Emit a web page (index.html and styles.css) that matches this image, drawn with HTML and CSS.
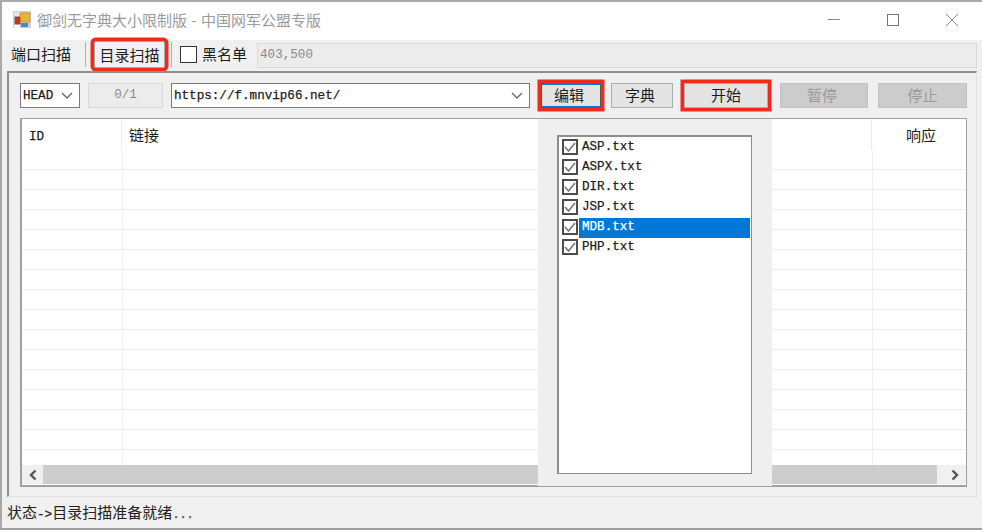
FILE: index.html
```html
<!DOCTYPE html>
<html lang="zh-CN">
<head>
<meta charset="utf-8">
<title>御剑无字典大小限制版</title>
<link rel="stylesheet" href="styles.css">
</head>
<body>
<div class="window">
  <header class="titlebar">
    <svg class="logo" viewBox="0 0 18 18" width="18" height="18"><rect x="0" y="0" width="18" height="17" fill="#cfcfcf"/><rect x="1" y="1" width="6" height="4" fill="#e6e6e6"/><rect x="1" y="14" width="6" height="3" fill="#f6f6f6"/><rect x="7" y="2" width="10" height="9" fill="#e8b52e" stroke="#b08a2a" stroke-width=".6"/><rect x="2" y="6" width="5" height="7" fill="#c8342a" stroke="#8a3a30" stroke-width=".6"/><rect x="8" y="12" width="7" height="4" fill="#3f86dc"/></svg>
    <span class="title">御剑无字典大小限制版 - 中国网军公盟专版</span>
    <div class="controls">
      <svg width="14" height="14" viewBox="0 0 14 14"><path d="M1 6.5H13" stroke="#8a8a8a" fill="none"/></svg>
      <svg width="14" height="14" viewBox="0 0 14 14"><rect x="1.5" y="1.5" width="11" height="11" stroke="#777" fill="none"/></svg>
      <svg width="14" height="14" viewBox="0 0 14 14"><path d="M1 1L13 13M13 1L1 13" stroke="#888" fill="none"/></svg>
    </div>
  </header>
  <nav class="toolbar">
    <span class="tab first-tab">端口扫描</span>
    <span class="sep"></span>
    <span class="tab tab-active ring">目录扫描</span>
    <span class="sep sep2"></span>
    <span class="check big"></span>
    <span class="tab black">黑名单</span>
    <span class="codes">403,500</span>
  </nav>
  <main class="panel">
    <div class="row">
      <div class="combo method"><span class="mono">HEAD</span><svg class="chev" width="12" height="7" viewBox="0 0 12 7"><path d="M1 1L6 6L11 1" stroke="#666" stroke-width="1.3" fill="none"/></svg></div>
      <div class="counter">0/1</div>
      <div class="combo url"><span class="mono">https://f.mnvip66.net/</span><svg class="chev" width="12" height="7" viewBox="0 0 12 7"><path d="M1 1L6 6L11 1" stroke="#666" stroke-width="1.3" fill="none"/></svg></div>
      <button class="btn edit ring">编辑</button>
      <button class="btn dict">字典</button>
      <button class="btn start ring">开始</button>
      <button class="btn off pause">暂停</button>
      <button class="btn off stop">停止</button>
    </div>
    <div class="grid">
      <div class="ghead"><span class="c1">ID</span><span class="c2">链接</span><span class="c3">响应</span></div>
      <div class="gbody">
        <div class="grow"><i></i><i></i><i></i></div>
        <div class="grow"><i></i><i></i><i></i></div>
        <div class="grow"><i></i><i></i><i></i></div>
        <div class="grow"><i></i><i></i><i></i></div>
        <div class="grow"><i></i><i></i><i></i></div>
        <div class="grow"><i></i><i></i><i></i></div>
        <div class="grow"><i></i><i></i><i></i></div>
        <div class="grow"><i></i><i></i><i></i></div>
        <div class="grow"><i></i><i></i><i></i></div>
        <div class="grow"><i></i><i></i><i></i></div>
        <div class="grow"><i></i><i></i><i></i></div>
        <div class="grow"><i></i><i></i><i></i></div>
        <div class="grow"><i></i><i></i><i></i></div>
        <div class="grow"><i></i><i></i><i></i></div>
        <div class="grow"><i></i><i></i><i></i></div>
        <div class="grow"><i></i><i></i><i></i></div>
      </div>
      <div class="hbar">
        <span class="arrow"><svg width="10" height="12" viewBox="0 0 10 12"><path d="M7.5 1.5L3 6L7.5 10.5" stroke="#555" stroke-width="2.4" fill="none"/></svg></span>
        <span class="thumb"></span>
        <span class="arrow arrow-r"><svg width="10" height="12" viewBox="0 0 10 12"><path d="M2.5 1.5L7 6L2.5 10.5" stroke="#555" stroke-width="2.4" fill="none"/></svg></span>
      </div>
    </div>
    <aside class="popup">
      <ul class="list">
        <li><span class="check"><svg width="12" height="12" viewBox="0 0 12 12"><path d="M1 6L4.5 10L11 2" stroke="#777" stroke-width="1.6" fill="none"/></svg></span><span class="item mono">ASP.txt</span></li>
        <li><span class="check"><svg width="12" height="12" viewBox="0 0 12 12"><path d="M1 6L4.5 10L11 2" stroke="#777" stroke-width="1.6" fill="none"/></svg></span><span class="item mono">ASPX.txt</span></li>
        <li><span class="check"><svg width="12" height="12" viewBox="0 0 12 12"><path d="M1 6L4.5 10L11 2" stroke="#777" stroke-width="1.6" fill="none"/></svg></span><span class="item mono">DIR.txt</span></li>
        <li><span class="check"><svg width="12" height="12" viewBox="0 0 12 12"><path d="M1 6L4.5 10L11 2" stroke="#777" stroke-width="1.6" fill="none"/></svg></span><span class="item mono">JSP.txt</span></li>
        <li><span class="check"><svg width="12" height="12" viewBox="0 0 12 12"><path d="M1 6L4.5 10L11 2" stroke="#777" stroke-width="1.6" fill="none"/></svg></span><span class="item mono sel">MDB.txt</span></li>
        <li><span class="check"><svg width="12" height="12" viewBox="0 0 12 12"><path d="M1 6L4.5 10L11 2" stroke="#777" stroke-width="1.6" fill="none"/></svg></span><span class="item mono">PHP.txt</span></li>
      </ul>
    </aside>
  </main>
  <footer class="status">状态<span class="mono">-&gt;</span>目录扫描准备就绪<span class="mono dots">...</span></footer>
</div>
</body>
</html>
```
FILE: styles.css
```css
* { box-sizing: border-box; }
html, body { margin: 0; padding: 0; }
body {
  width: 982px; height: 530px; overflow: hidden; background: #f0f0f0;
  font-family: "Noto Sans CJK SC", "Liberation Sans", sans-serif;
  color: #1c1c1c;
}
.window {
  width: 982px; height: 530px; position: relative;
  border-top: 2px solid #a9a9a9; border-left: 2px solid #a9a9a9; border-bottom: 2px solid #a0a0a0;
  display: flex; flex-direction: column;
}
.titlebar {
  height: 38px; background: #fff; display: flex; align-items: center;
  padding: 0 0 2px 11px; flex: none;
}
.logo { flex: none; }
.title { margin-left: 6px; font-size: 15px; color: #9b9b9b; white-space: nowrap; line-height: 20px; word-spacing: 1px; }
.controls { margin-left: auto; display: flex; gap: 45px; padding-right: 23px; }
.toolbar {
  height: 31px; flex: none; display: flex; align-items: center; font-size: 15px; padding: 0 0 3px 10px;
}
.tab { white-space: nowrap; line-height: 24px; }
.first-tab { margin-left: -1px; margin-right: 1px; }
.sep { width: 1px; height: 25px; background: #b0b0b0; margin: 0 8px 0 13px; }
.sep2 { margin: 0 8px 0 6px; }
.tab-active {
  width: 71px; height: 27px; text-align: center; line-height: 25px;
  border: 1px solid #a8a8a8; background: #f0f0f0;
}
.ring { box-shadow: 0 0 0 3.5px #f02a1c; border-radius: 2px; }
.check {
  width: 16px; height: 16px; border: 2px solid #4d4d4d; background: #fff; flex: none; display: block; margin-top: -2px;
}
.check svg { display: block; }
.check.big { width: 17px; height: 17px; border-width: 1px; border-color: #333; margin-top: 0; }
.black { margin-left: 5px; }
.codes {
  margin: 3px 0 0 10px; width: 720px; height: 25px; border: 1px solid #dadada; background: #ececec;
  font-family: "Liberation Mono", monospace; font-size: 12.6px; line-height: 23px; color: #8a8a8a; padding-left: 2px;
}
.panel {
  flex: 1; position: relative; margin-left: 5px; width: 970px;
  border-top: 2px solid #8f8f8f; border-left: 2px solid #8f8f8f;
  border-right: 1px solid #e2e2e2; border-bottom: 1px solid #e2e2e2;
  padding: 10px 0 0 11px;
}
.row { display: flex; align-items: center; height: 25px; margin-bottom: 10px; font-size: 15px; }
.mono { font-family: "Liberation Mono", monospace; font-size: 12.6px; white-space: pre; -webkit-text-stroke: 0.25px currentColor; }
.combo {
  height: 25px; background: #fff; border: 1px solid #7a7a7a; display: flex; align-items: center;
  justify-content: space-between; padding: 0 4px 0 2px;
}
.method { width: 60px; }
.url { width: 359px; margin-left: 8px; }
.counter {
  width: 75px; height: 25px; margin-left: 8px; background: #ececec; border: 1px solid #d8d8d8;
  font-family: "Liberation Mono", monospace; font-size: 12.6px; line-height: 23px; color: #8a8a8a; text-align: center;
}
.chev { flex: none; margin-right: 2px; }
.btn {
  height: 25px; padding: 0 0 2px; font: inherit; color: #1c1c1c; background: #e4e4e4; border: 1px solid #adadad; border-radius: 0;
  line-height: 20px;
}
.edit { width: 60px; margin-left: 11px; border-color: #0078d7 #555 #0078d7 #555; border-width: 2px 1px; padding-right: 4px; }
.dict { width: 62px; margin-left: 10px; padding-right: 4px; }
.start { width: 84px; margin-left: 11px; }
.off { background: #cccccc; color: #9a9a9a; border-color: #c2c2c2; }
.pause { width: 88px; margin-left: 12px; padding-right: 4px; }
.stop { width: 89px; margin-left: 10px; }
.grid {
  width: 947px; height: 369px; background: #fff; border: 2px solid #a0a0a0; border-width: 1px 1px 2px 2px;
  display: flex; flex-direction: column; overflow: hidden;
}
.ghead { height: 31px; flex: none; display: flex; font-size: 15px; line-height: 32px; }
.ghead span { display: block; height: 31px; border-right: 1px solid #ebebeb; }
.c1 { width: 100px; padding: 2px 0 0 7px; font-family: "Liberation Mono", monospace; font-size: 12.6px; -webkit-text-stroke: 0.25px currentColor; }
.c2 { width: 750px; padding-left: 7px; }
.c3 { flex: 1; border-right: 0 !important; padding-left: 34px; }
.gbody { height: 315px; flex: none; overflow: hidden; }
.grow { height: 20px; display: flex; border-bottom: 1px solid #ececec; }
.grow i { display: block; border-right: 1px solid #efefef; }
.grow i:nth-child(1) { width: 101px; }
.grow i:nth-child(2) { width: 750px; }
.grow i:nth-child(3) { flex: 1; border-right: 0; }
.hbar { height: 19px; flex: none; display: flex; background: #f0f0f0; }
.arrow { width: 21px; flex: none; display: flex; align-items: center; justify-content: center; }
.arrow-r { width: 29px; padding-left: 6px; }
.thumb { flex: 1; background: #cdcdcd; }
.popup {
  position: absolute; left: 529px; top: 46px; width: 234px; height: 367px; background: #efefef;
  padding: 16px 19px 12px;
}
.list {
  list-style: none; margin: 0; padding: 1px 1px 0 3px; height: 339px; width: 195px;
  background: #fff; border: 1px solid #8e8e8e; border-top-width: 2px; border-left-width: 2px;
}
.list li { height: 20px; display: flex; align-items: center; }
.item { flex: 1; height: 20px; line-height: 19px; padding-left: 3px; margin-left: 1px; font-weight: 400; }
.sel { background: #0078d7; color: #fff; }
.status {
  flex: none; height: 31px; font-size: 15px; line-height: 29px; padding-left: 5px; color: #222;
}
.dots { letter-spacing: -0.5px; color: #555; }
```
